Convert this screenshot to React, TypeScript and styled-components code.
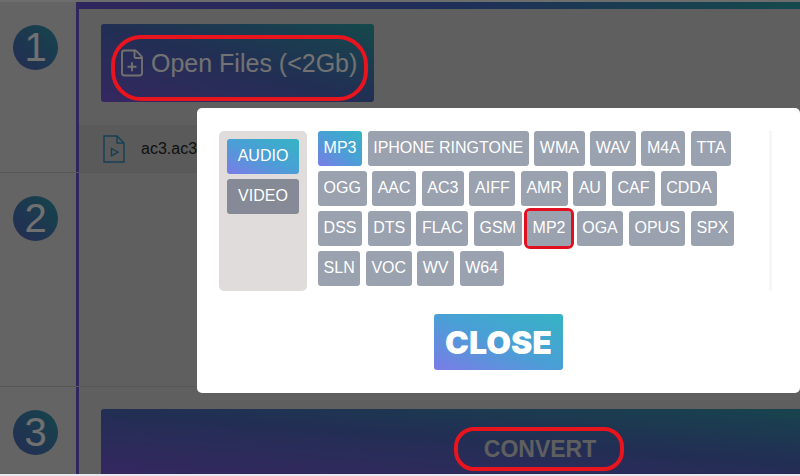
import React from "react";
import styled, { createGlobalStyle } from "styled-components";
import { FilePlus } from "lucide-react";

const dimGradient = "linear-gradient(to top right, #6a50c0, #445ea8 50%, #2a9298)";
const circleGradient = "linear-gradient(to top right, #4a58a8, #2a8a98)";
const brightGradient = "linear-gradient(to top right, #7b7ce6, #4a9fd6 50%, #35b4c4)";

const GlobalStyle = createGlobalStyle`
  html, body {
    margin: 0;
    padding: 0;
    background: #e8e8f0;
  }
  * {
    box-sizing: border-box;
  }
`;

const Screen = styled.div`
  position: relative;
  width: 800px;
  height: 476px;
  overflow: hidden;
  font-family: "Liberation Sans", Arial, sans-serif;
`;

const Main = styled.div`
  position: relative;
  display: flex;
  flex-direction: column;
  height: 474px;
  background: #c8c8c8;
  overflow: hidden;
`;

const TopStrip = styled.div`
  flex: none;
  height: 2px;
  background: #d8dcdc;
`;

const StepRow = styled.section<{ $height?: number }>`
  display: grid;
  grid-template-columns: 76px 1fr;
  flex: ${(props) => (props.$height ? `none` : `1`)};
  height: ${(props) => (props.$height ? `${props.$height}px` : "auto")};
  min-height: 0;
  border-bottom: ${(props) => (props.$height ? "1px solid #aeaeae" : "none")};
`;

const NumberCol = styled.div`
  padding: 23px 0 0 13px;
`;

const StepCircle = styled.div`
  display: flex;
  align-items: center;
  justify-content: center;
  width: 45px;
  height: 45px;
  border-radius: 50%;
  background: ${circleGradient};
  color: #e0e0e0;
  font-size: 40px;
`;

const ContentCol = styled.div<{ $first?: boolean }>`
  position: relative;
  display: flex;
  flex-direction: column;
  min-width: 0;
  background: #bebebe;
  border-left: 3px solid #5c4cb8;
  padding-top: ${(props) => (props.$first ? "22px" : "0")};
`;

const TopBar = styled.div`
  position: absolute;
  top: 0;
  left: -3px;
  right: 0;
  height: 7px;
  background: linear-gradient(to right, #5c4cb8, #3e5cb0 50%, #2a9298);
`;

const OpenButton = styled.div`
  display: flex;
  align-items: center;
  gap: 4px;
  width: 273px;
  height: 78px;
  margin-left: 22px;
  padding-left: 16px;
  border-radius: 3px;
  background: ${dimGradient};
  color: #e4e4e4;
  font-size: 25px;
`;

const FileRow = styled.div`
  display: flex;
  align-items: center;
  gap: 16px;
  height: 47px;
  margin-top: 23px;
  padding-left: 24px;
  background: #b4b4b4;
  color: #222;
  font-size: 16px;
`;

const ConvertButton = styled.div`
  flex: none;
  display: flex;
  align-items: center;
  justify-content: center;
  width: 878px;
  height: 65px;
  margin: 22px 0 0 22px;
  padding-top: 16px;
  border-radius: 3px 3px 0 0;
  background: ${dimGradient};
  color: #bebebe;
  font-size: 23px;
  font-weight: 700;
`;

const Overlay = styled.div`
  position: absolute;
  inset: 0;
  display: flex;
  justify-content: flex-end;
  align-items: flex-start;
  padding-top: 108px;
  background: rgba(0, 0, 0, 0.5);
`;

const Modal = styled.div`
  display: flex;
  flex-direction: column;
  align-items: center;
  gap: 23px;
  width: 603px;
  height: 285px;
  padding: 23px 22px;
  border-radius: 5px;
  background: #fff;
`;

const ModalBody = styled.div`
  display: flex;
  align-self: stretch;
  gap: 11px;
  height: 161px;
`;

const TabPanel = styled.div`
  display: flex;
  flex: none;
  flex-direction: column;
  gap: 5px;
  width: 88px;
  padding: 8px;
  border-radius: 5px;
  background: #e0dcdc;
`;

const Tab = styled.div<{ $active?: boolean }>`
  display: flex;
  align-items: center;
  justify-content: center;
  height: 35px;
  padding-bottom: 2px;
  border-radius: 3px;
  background: ${(props) => (props.$active ? brightGradient : "#858a96")};
  color: #fff;
  font-size: 16px;
`;

const FormatArea = styled.div`
  flex: none;
  width: 454px;
  padding-right: 6px;
  border-right: 3px solid #f6f6f6;
`;

const FormatGrid = styled.div`
  display: flex;
  flex-wrap: wrap;
  align-content: flex-start;
  gap: 5px 5.5px;
`;

const Format = styled.div<{ $active?: boolean; $marked?: boolean }>`
  display: flex;
  align-items: center;
  height: 35px;
  padding: 0 5.6px 2px;
  border-radius: 3px;
  background: ${(props) => (props.$active ? brightGradient : "#9aa1af")};
  color: #fff;
  font-size: 16px;
  outline: ${(props) => (props.$marked ? "3px solid #e01020" : "none")};
`;

const CloseButton = styled.div`
  display: flex;
  flex: none;
  align-items: center;
  justify-content: center;
  width: 129px;
  height: 56px;
  border-radius: 3px;
  background: ${brightGradient};
  color: #fff;
  font-family: Inter, "Liberation Sans", sans-serif;
  font-size: 32px;
  font-weight: 900;
`;

const RedMark = styled.div<{ $left: number; $top: number; $width: number; $height: number; $radius: number }>`
  position: absolute;
  left: ${(props) => props.$left}px;
  top: ${(props) => props.$top}px;
  width: ${(props) => props.$width}px;
  height: ${(props) => props.$height}px;
  border: 4px solid #e8141e;
  border-radius: ${(props) => props.$radius}px;
`;

const BottomStrip = styled.div`
  height: 2px;
  background: #e8e8f0;
`;

const formats = [
  "MP3", "IPHONE RINGTONE", "WMA", "WAV", "M4A", "TTA",
  "OGG", "AAC", "AC3", "AIFF", "AMR", "AU", "CAF", "CDDA",
  "DSS", "DTS", "FLAC", "GSM", "MP2", "OGA", "OPUS", "SPX",
  "SLN", "VOC", "WV", "W64",
];

const VideoFileIcon = () => (
  <svg width="22" height="28" viewBox="0 0 22 28" fill="none" stroke="#2a7ea8" strokeWidth="1.4">
    <path d="M1 1h13l7 7v19H1z" />
    <path d="M14 1v7h7" />
    <path d="M8.5 13.5l6.5 3.7-6.5 3.7z" />
  </svg>
);

const App = () => {
  return (
    <Screen>
      <GlobalStyle />
      <Main>
        <TopStrip />
        <StepRow $height={171}>
          <NumberCol>
            <StepCircle>1</StepCircle>
          </NumberCol>
          <ContentCol $first>
            <TopBar />
            <OpenButton>
              <FilePlus size={30} strokeWidth={1.5} />
              Open Files (&lt;2Gb)
            </OpenButton>
            <FileRow>
              <VideoFileIcon />
              ac3.ac3
            </FileRow>
          </ContentCol>
        </StepRow>
        <StepRow $height={214}>
          <NumberCol>
            <StepCircle>2</StepCircle>
          </NumberCol>
          <ContentCol />
        </StepRow>
        <StepRow>
          <NumberCol>
            <StepCircle>3</StepCircle>
          </NumberCol>
          <ContentCol>
            <ConvertButton>CONVERT</ConvertButton>
          </ContentCol>
        </StepRow>
        <Overlay>
          <Modal>
            <ModalBody>
              <TabPanel>
                <Tab $active>AUDIO</Tab>
                <Tab>VIDEO</Tab>
              </TabPanel>
              <FormatArea>
                <FormatGrid>
                  {formats.map((name) => (
                    <Format key={name} $active={name === "MP3"} $marked={name === "MP2"}>
                      {name}
                    </Format>
                  ))}
                </FormatGrid>
              </FormatArea>
            </ModalBody>
            <CloseButton>CLOSE</CloseButton>
          </Modal>
        </Overlay>
      </Main>
      <BottomStrip />
      <RedMark $left={111} $top={35} $width={257} $height={66} $radius={30} />
      <RedMark $left={454} $top={427} $width={170} $height={44} $radius={20} />
    </Screen>
  );
};

export default App;
